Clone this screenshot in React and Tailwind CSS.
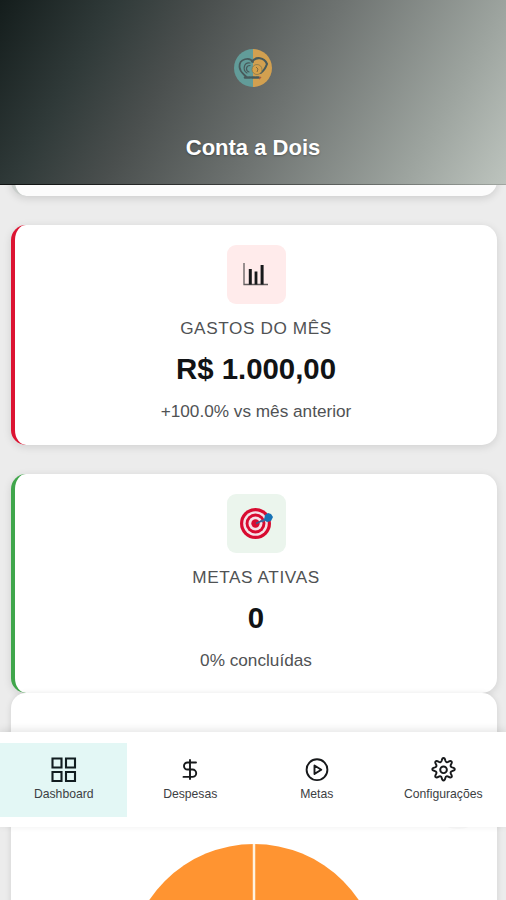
import React from "react";

function Logo() {
  return (
    <svg viewBox="0 0 40 40" className="block h-10 w-10">
      <path d="M20 1a19 19 0 0 0 0 38z" fill="#629c99" />
      <path d="M20 1a19 19 0 0 1 0 38z" fill="#d2a050" />
      <g fill="none" stroke="#475a5b" strokeLinecap="round" strokeLinejoin="round">
        <path d="M20 14c-3-5-14-4-13.500 5 .4 5 3.500 6.500 6.500 9.500" strokeWidth="1.800" />
        <path d="M19 13.500c4-5 12-4.500 15 2.500-1.500 4-3 7-6.500 9" strokeWidth="2.100" />
        <path d="M17 15c-6-1-8 7-3 10M17 17.500c-4 0-5 5-1 6.500" strokeWidth="1.200" />
        <path d="M12 29.500h5m2 0h8" strokeWidth="2.600" strokeDasharray="2.500 1.500" />
      </g>
      <circle cx="24" cy="21.500" r="5" fill="#d5a14b" stroke="#83784f" strokeWidth=".8" />
      <path d="M23 19l2 2-1 3" fill="none" stroke="#806b42" strokeWidth="1" />
      <path d="M26 31l2-2" stroke="#a85a42" strokeWidth="1.300" />
    </svg>
  );
}

function BarsIcon() {
  return (
    <svg viewBox="0 0 28 28" className="h-7 w-7">
      <path d="M2 2v21.500h24" fill="none" stroke="#625d5e" strokeWidth="1.300" />
      <path d="M6.800 8h3v15.500h-3zM12.600 10.500h2.800v13h-2.800zM18.600 4h3v19.500h-3z" fill="#17191b" />
    </svg>
  );
}

function TargetIcon() {
  return (
    <svg viewBox="0 0 36 36" className="h-9 w-9">
      <circle cx="17.500" cy="17.500" r="15.500" fill="#d80b30" />
      <circle cx="17.500" cy="17.500" r="12.300" fill="#f5e2e8" />
      <circle cx="17.500" cy="17.500" r="9.900" fill="#d80b30" />
      <circle cx="17.500" cy="17.500" r="7" fill="#f5e2e8" />
      <circle cx="17.500" cy="17.500" r="4.200" fill="#d80b30" />
      <path d="M18 17.500l11-5" stroke="#365b91" strokeWidth="1.600" />
      <path d="M27 9l3-2 3 1 2 3-2 4-4 1-3-2z" fill="#1672b5" />
      <path d="M22 14.500l4-1 2 1-4 2z" fill="#426b9d" />
    </svg>
  );
}

const navClass = "flex h-[74px] flex-1 flex-col items-center pt-[13px] pl-px text-[12.200px] leading-4 text-[#3c4043]";

function GridIcon() {
  return (
    <svg viewBox="0 0 28 28" className="h-7 w-7" fill="none" stroke="#111d20" strokeWidth="2.100">
      <path d="M2.500 2.500h9v9h-9zM16 2.500h9v9h-9zM2.500 16h9v9h-9zM16 16h9v9h-9z" />
    </svg>
  );
}

function DollarIcon() {
  return (
    <svg viewBox="0 0 28 28" className="h-7 w-7" fill="none" stroke="#17191b" strokeWidth="1.900" strokeLinecap="round" strokeLinejoin="round">
      <path d="M14 4v19M20 6.500h-8.500a3.500 3.500 0 0 0 0 7h5a3.700 3.700 0 0 1 0 7.400H7.500" />
    </svg>
  );
}

function PlayIcon() {
  return (
    <svg viewBox="0 0 28 28" className="h-7 w-7" fill="none" stroke="#17191b" strokeWidth="1.900" strokeLinejoin="round">
      <circle cx="14" cy="13.700" r="10.400" />
      <path d="M11.500 9.500l6.800 4.200-6.800 4.200z" />
    </svg>
  );
}

function GearIcon() {
  return (
    <svg viewBox="0.500 1.200 26 26" className="h-7 w-7" fill="none" stroke="#17191b" strokeWidth="1.800" strokeLinejoin="round">
      <circle cx="14" cy="14" r="3.100" />
      <path d="M12.300 5.500c.6-3.200 2.800-3.200 3.400 0 .3 1.300 1.500 1.800 2.700 1.100 2.700-1.800 4.300-.2 2.500 2.500-.7 1.200-.2 2.400 1.100 2.700 3.200.6 3.200 2.800 0 3.400-1.300.3-1.800 1.500-1.100 2.700 1.800 2.700.2 4.300-2.500 2.500-1.200-.7-2.400-.2-2.700 1.100-.6 3.200-2.800 3.200-3.400 0-.3-1.300-1.500-1.800-2.700-1.100-2.700 1.800-4.300.2-2.500-2.500.7-1.200.2-2.400-1.100-2.700-3.200-.6-3.200-2.800 0-3.400 1.300-.3 1.800-1.500 1.100-2.700-1.800-2.700-.2-4.300 2.500-2.500 1.200.7 2.400.2 2.700-1.100z" />
    </svg>
  );
}

function StatCard({ border, tint, icon, label, value, note, spacing }) {
  return (
    <section className={`flex shrink-0 flex-col items-center rounded-[15px] border-l-[4px] bg-white shadow-[0_2px_9px_rgba(0,0,0,0.12)] ${border} ${spacing}`}>
      <div className={`flex h-[59px] w-[59px] shrink-0 items-center justify-center rounded-[9px] ${tint}`}>{icon}</div>
      <h2 className="mt-3 text-[17.200px] leading-6 tracking-[0.600px] text-[#505254]">{label}</h2>
      <p className="mt-[11px] text-[29.400px] leading-9 font-bold text-[#111315]">{value}</p>
      <p className="mt-3 text-[17.200px] leading-6 text-[#505254]">{note}</p>
    </section>
  );
}

export default function App() {
  return (
    <div className="relative h-[900px] w-full overflow-hidden bg-[#ececec] font-['Liberation_Sans',Arial,sans-serif]">
      <main className="flex flex-col pr-[9px] pl-[11px]">
        <section className="h-[196px] shrink-0 rounded-[15px] border-l-[4px] border-[#c8cdca] bg-[#fcfcfc] shadow-[0_2px_9px_rgba(0,0,0,0.14)]" />
        <StatCard
          border="border-[#dc1432]"
          spacing="mt-[29px] h-[220px] pt-[20px]"
          tint="bg-[#ffebeb]"
          icon={<BarsIcon />}
          label="GASTOS DO MÊS"
          value="R$ 1.000,00"
          note="+100.0% vs mês anterior"
        />
        <StatCard
          border="border-[#40a64b]"
          spacing="mt-[29px] h-[219px] pt-[20px]"
          tint="bg-[#ebf5ed]"
          icon={<TargetIcon />}
          label="METAS ATIVAS"
          value="0"
          note="0% concluídas"
        />
        <section className="flex h-[420px] shrink-0 justify-center rounded-[15px] bg-white pt-[151px] shadow-[0_1px_6px_rgba(0,0,0,0.12)]">
          <svg viewBox="0 0 252 252" className="mr-px h-[252px] w-[252px] shrink-0">
            <circle cx="126" cy="126" r="126" fill="#ff9431" />
            <path d="M126 0v126" stroke="#fff2df" strokeWidth="2.500" />
          </svg>
        </section>
      </main>

      <header className="absolute inset-x-0 top-0 flex h-[185px] flex-col items-center bg-[linear-gradient(120deg,#141d1c_0%,#303a39_19%,#4a4f4e_34%,#6e7371_56%,#9da49f_83%,#bdc4be_100%)] pt-12">
        <Logo />
        <h1 className="mt-[44px] text-[22px] leading-8 font-bold text-white [text-shadow:0_1px_2px_rgba(0,0,0,0.3)]">Conta a Dois</h1>
        <div className="absolute inset-x-0 bottom-0 h-px bg-linear-to-r from-black/70 to-black/15" />
      </header>

      <div className="absolute top-[769px] right-[18px] h-[60px] w-[60px] rounded-full bg-[#f9f9f9]" />
      <nav className="absolute inset-x-0 top-[732px] flex h-[95px] bg-white pt-[11px] shadow-[0_-2px_8px_rgba(0,0,0,0.11)]">
        <div className={`${navClass} bg-[#e3f7f5]`}><GridIcon /><span className="mt-[2px]">Dashboard</span></div>
        <div className={navClass}><DollarIcon /><span className="mt-[2px]">Despesas</span></div>
        <div className={navClass}><PlayIcon /><span className="mt-[2px]">Metas</span></div>
        <div className={navClass}><GearIcon /><span className="mt-[2px]">Configurações</span></div>
      </nav>
    </div>
  );
}
